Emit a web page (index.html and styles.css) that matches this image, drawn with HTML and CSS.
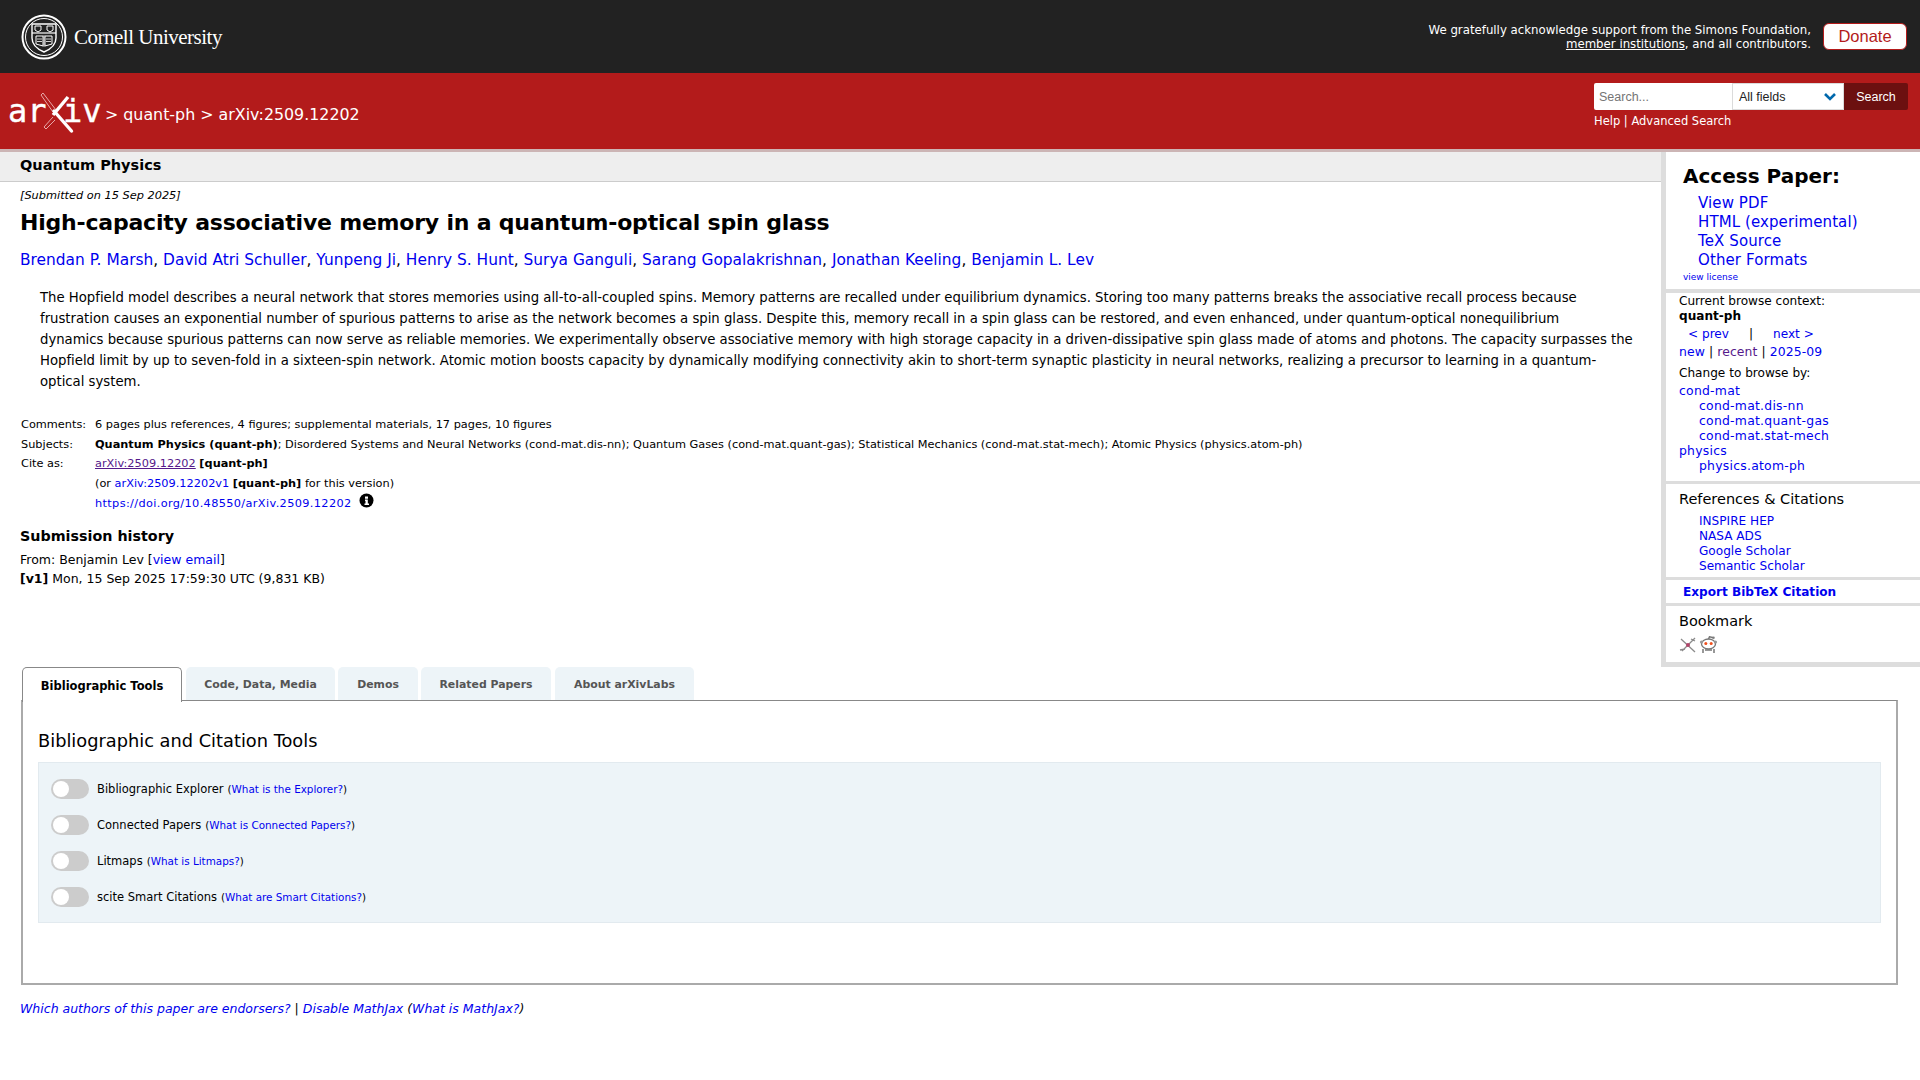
FILE: index.html
```html
<!DOCTYPE html>
<html lang="en">
<head>
    <meta charset="UTF-8">
    <title>High-capacity associative memory in a quantum-optical spin glass</title>
    <link rel="stylesheet" href="styles.css">
</head>
<body>
    <div class="top-bar">
        <div class="cornell">
            <svg class="seal" width="46" height="46" viewBox="0 0 46 46" fill="none" stroke="#fff">
                <circle cx="23" cy="23" r="21.5" stroke-width="2"/>
                <circle cx="23" cy="23" r="18.5" stroke-width="1"/>
                <path d="M11 10h24v14c0 7-5 11-12 14c-7-3-12-7-12-14z" stroke-width="1.4"/>
                <path d="M11 19h24" stroke-width="1.2"/>
                <path d="M14 12h6v4l-3 2l-3-2zM26 12h6v4l-3 2l-3-2z" stroke-width="1"/>
                <path d="M15 22h7v10l-7-2zM31 22h-7v10l7-2z" stroke-width="1"/>
                <path d="M16 25h5M16 27.500h5M25 25h5M25 27.500h5M23 21v12" stroke-width=".8"/>
            </svg>
            <span class="cornell-name">Cornell University</span>
        </div>
        <div class="support">
            <p class="thanks">We gratefully acknowledge support from the Simons Foundation,<br><a href="#">member institutions</a>, and all contributors.</p>
            <a class="donate" href="#">Donate</a>
        </div>
    </div>

    <div class="red-bar">
        <div class="crumbs">
            <svg class="logo" width="104" height="50" viewBox="0 0 104 50" fill="none">
                <text class="logo-text" x="8" y="32">ar</text>
                <text class="logo-text" x="63" y="32">iv</text>
                <path d="M41 5l2-2l13 17l-3 2z" stroke="#e8a9a9" stroke-width="1"/>
                <path d="M54 21l17.500 20" stroke="#fff" stroke-width="3.400" stroke-linecap="round"/>
                <path d="M68 7L53 25" stroke="#fff" stroke-width="3.400"/>
                <path d="M53 27l-9 10l2 2l9-9" stroke="#e8a9a9" stroke-width="1"/>
            </svg>
            <span class="path">&gt; <a href="#">quant-ph</a> &gt; arXiv:2509.12202</span>
        </div>
        <div class="search">
            <div class="search-row">
                <input class="search-input" type="text" placeholder="Search...">
                <div class="search-select">All fields
                    <svg width="14" height="9" viewBox="0 0 14 9" fill="none"><path d="M2 2l5 5l5-5" stroke="#0068ac" stroke-width="2.600"/></svg>
                </div>
                <button class="search-button">Search</button>
            </div>
            <p class="search-links"><a href="#">Help</a> | <a href="#">Advanced Search</a></p>
        </div>
    </div>

    <div class="main">
        <div class="content">
            <div class="subheader">Quantum Physics</div>
            <div class="paper">
                <div class="dateline">[Submitted on 15 Sep 2025]</div>
                <h1 class="title">High-capacity associative memory in a quantum-optical spin glass</h1>
                <div class="authors"><a href="#">Brendan P. Marsh</a>, <a href="#">David Atri Schuller</a>, <a href="#">Yunpeng Ji</a>, <a href="#">Henry S. Hunt</a>, <a href="#">Surya Ganguli</a>, <a href="#">Sarang Gopalakrishnan</a>, <a href="#">Jonathan Keeling</a>, <a href="#">Benjamin L. Lev</a></div>
                <blockquote class="abstract">The Hopfield model describes a neural network that stores memories using all-to-all-coupled spins. Memory patterns are recalled under equilibrium dynamics. Storing too many patterns breaks the associative recall process because<br>frustration causes an exponential number of spurious patterns to arise as the network becomes a spin glass. Despite this, memory recall in a spin glass can be restored, and even enhanced, under quantum-optical nonequilibrium<br>dynamics because spurious patterns can now serve as reliable memories. We experimentally observe associative memory with high storage capacity in a driven-dissipative spin glass made of atoms and photons. The capacity surpasses the<br>Hopfield limit by up to seven-fold in a sixteen-spin network. Atomic motion boosts capacity by dynamically modifying connectivity akin to short-term synaptic plasticity in neural networks, realizing a precursor to learning in a quantum-<br>optical system.</blockquote>
                <table class="meta">
                    <tr><td class="meta-label">Comments:</td><td>6 pages plus references, 4 figures; supplemental materials, 17 pages, 10 figures</td></tr>
                    <tr><td class="meta-label">Subjects:</td><td><b>Quantum Physics (quant-ph)</b>; Disordered Systems and Neural Networks (cond-mat.dis-nn); Quantum Gases (cond-mat.quant-gas); Statistical Mechanics (cond-mat.stat-mech); Atomic Physics (physics.atom-ph)</td></tr>
                    <tr><td class="meta-label">Cite as:</td><td><a class="visited underline" href="#">arXiv:2509.12202</a> <b>[quant-ph]</b></td></tr>
                    <tr><td></td><td>(or <a href="#">arXiv:2509.12202v1</a> <b>[quant-ph]</b> for this version)</td></tr>
                    <tr><td></td><td><a class="doi" href="#">https://doi.org/10.48550/arXiv.2509.12202</a>
                        <svg class="info" width="15" height="15" viewBox="0 0 15 15"><circle cx="7.500" cy="7.500" r="7" fill="#000"/><path d="M6 3.500h3v2.200H6zM6 6.500h2.800v4H10V12H5.500v-1.500h1v-2.500h-.5z" fill="#fff"/></svg>
                    </td></tr>
                </table>
                <h2 class="history-title">Submission history</h2>
                <div class="history">From: Benjamin Lev [<a href="#">view email</a>]<br><b>[v1]</b> Mon, 15 Sep 2025 17:59:30 UTC (9,831 KB)</div>
            </div>
        </div>

        <div class="sidebar">
            <div class="side-section access">
                <h2 class="access-title">Access Paper:</h2>
                <ul class="access-links">
                    <li><a href="#">View PDF</a></li>
                    <li><a href="#">HTML (experimental)</a></li>
                    <li><a href="#">TeX Source</a></li>
                    <li><a href="#">Other Formats</a></li>
                </ul>
                <a class="license" href="#">view license</a>
            </div>
            <div class="side-section browse">
                <div>Current browse context:</div>
                <div><b>quant-ph</b></div>
                <div class="prevnext"><a href="#">&lt;&nbsp;prev</a><span class="sep">|</span><a href="#">next&nbsp;&gt;</a></div>
                <div class="recent"><a href="#">new</a> | <a class="visited" href="#">recent</a> | <a href="#">2025-09</a></div>
                <div class="change">Change to browse by:</div>
                <ul class="browse-list">
                    <li><a href="#">cond-mat</a></li>
                    <li class="sub"><a href="#">cond-mat.dis-nn</a></li>
                    <li class="sub"><a href="#">cond-mat.quant-gas</a></li>
                    <li class="sub"><a href="#">cond-mat.stat-mech</a></li>
                    <li><a href="#">physics</a></li>
                    <li class="sub"><a href="#">physics.atom-ph</a></li>
                </ul>
            </div>
            <div class="side-section refs">
                <h3 class="side-title">References &amp; Citations</h3>
                <ul class="refs-list">
                    <li class="sub"><a href="#">INSPIRE HEP</a></li>
                    <li class="sub"><a href="#">NASA ADS</a></li>
                    <li class="sub"><a href="#">Google Scholar</a></li>
                    <li class="sub"><a href="#">Semantic Scholar</a></li>
                </ul>
            </div>
            <div class="side-section export"><a href="#">Export BibTeX Citation</a></div>
            <div class="side-section bookmark">
                <h3 class="side-title">Bookmark</h3>
                <div class="bookmark-icons">
                    <svg width="18" height="18" viewBox="0 0 18 18" fill="none" stroke="#8b8b8b" stroke-width="1.300">
                        <path d="M2 3l14 13M16 2L3 15M1 14l5-1M12 3l4 2"/>
                        <circle cx="9" cy="9" r="2" fill="#b0456a" stroke="none"/>
                    </svg>
                    <svg width="19" height="18" viewBox="0 0 19 18">
                        <ellipse cx="9.500" cy="8" rx="7" ry="5" fill="#fff" stroke="#777" stroke-width="1.300"/>
                        <circle cx="2.500" cy="6" r="1.600" fill="#999"/>
                        <circle cx="16.500" cy="6" r="1.600" fill="#999"/>
                        <circle cx="6.800" cy="7.500" r="1.500" fill="#f0501e"/>
                        <circle cx="12.200" cy="7.500" r="1.500" fill="#f0501e"/>
                        <circle cx="14.500" cy="1.800" r="1.300" fill="#888"/>
                        <path d="M9.500 3l1-2.200l4 1M4 13v4M15 13v4M6 14h7" stroke="#777" stroke-width="1.500" fill="none"/>
                    </svg>
                </div>
            </div>
        </div>
    </div>

    <div class="labs">
        <div class="tabs">
            <div class="tab active">Bibliographic Tools</div>
            <div class="tab tab-code">Code, Data, Media</div>
            <div class="tab tab-demos">Demos</div>
            <div class="tab tab-related">Related Papers</div>
            <div class="tab tab-about">About arXivLabs</div>
        </div>
        <div class="panel">
            <h2 class="panel-title">Bibliographic and Citation Tools</h2>
            <div class="tool-box">
                <div class="tool"><span class="toggle"></span><span class="tool-name">Bibliographic Explorer</span> <span class="tool-help">(<a href="#">What is the Explorer?</a>)</span></div>
                <div class="tool"><span class="toggle"></span><span class="tool-name">Connected Papers</span> <span class="tool-help">(<a href="#">What is Connected Papers?</a>)</span></div>
                <div class="tool"><span class="toggle"></span><span class="tool-name">Litmaps</span> <span class="tool-help">(<a href="#">What is Litmaps?</a>)</span></div>
                <div class="tool"><span class="toggle"></span><span class="tool-name">scite Smart Citations</span> <span class="tool-help">(<a href="#">What are Smart Citations?</a>)</span></div>
            </div>
        </div>
    </div>

    <div class="endorsers"><a href="#">Which authors of this paper are endorsers?</a> | <a href="#">Disable MathJax</a> (<a href="#">What is MathJax?</a>)</div>
</body>
</html>
```

FILE: styles.css
```css
body {
    margin: 0;
    font-family: "DejaVu Sans", sans-serif;
    color: #000;
    background: #fff;
}
a {
    color: #0000ee;
    text-decoration: none;
}
a.visited {
    color: #551a8b;
}
a.underline {
    text-decoration: underline;
}
ul {
    list-style: none;
    margin: 0;
    padding: 0;
}

/* top bars */
.top-bar {
    height: 73px;
    background: #222;
    color: #fff;
    display: flex;
    justify-content: space-between;
    align-items: center;
    padding: 0 13px 0 21px;
    box-sizing: border-box;
}
.cornell {
    display: flex;
    align-items: center;
    gap: 7px;
}
.cornell-name {
    font-family: "Liberation Serif", serif;
    font-size: 21px;
    letter-spacing: -.5px;
    padding-top: 2px;
}
.support {
    display: flex;
    align-items: center;
    gap: 12px;
}
.thanks {
    margin: 0;
    text-align: right;
    font-size: 11.770px;
    line-height: 14px;
}
.thanks a {
    color: #fff;
    text-decoration: underline;
}
.donate {
    width: 84px;
    height: 27px;
    box-sizing: border-box;
    background: #fff;
    border: 1px solid #b31b1b;
    border-radius: 6px;
    color: #b31b1b;
    font-family: "Liberation Sans", sans-serif;
    font-size: 16.500px;
    line-height: 25px;
    text-align: center;
}
.red-bar {
    height: 79px;
    background: #b31b1b;
    border-bottom: 3px solid #ccb5b5;
    box-sizing: border-box;
    display: flex;
    justify-content: space-between;
    padding: 0 12px 0 0;
    color: #fff;
}
.crumbs {
    display: flex;
    align-items: flex-start;
    font-size: 15.850px;
}
.logo {
    margin-top: 17px;
}
.logo-text {
    font-family: "DejaVu Sans Mono", monospace;
    font-size: 32px;
    fill: #fff;
    stroke: #fff;
    stroke-width: .4px;
}
.path {
    margin: 32px 0 0 1px;
}
.path a {
    color: #fff;
}
.search {
    padding-top: 10px;
}
.search-row {
    display: flex;
    height: 27px;
}
.search-input {
    width: 138px;
    box-sizing: border-box;
    border: none;
    border-radius: 2px 0 0 2px;
    padding: 0 5px;
    font-family: "Liberation Sans", sans-serif;
    font-size: 12.500px;
}
.search-select {
    width: 112px;
    box-sizing: border-box;
    background: #fff;
    border: 1px solid #dbdbdb;
    padding: 0 6px;
    display: flex;
    align-items: center;
    justify-content: space-between;
    color: #222;
    font-family: "Liberation Sans", sans-serif;
    font-size: 12.500px;
}
.search-button {
    width: 64px;
    border: none;
    border-radius: 0 2px 2px 0;
    background: #6c1010;
    color: #fff;
    font-family: "Liberation Sans", sans-serif;
    font-size: 12.500px;
}
.search-links {
    margin: 3px 0 0;
    font-size: 11.500px;
    line-height: 17px;
}
.search-links a {
    color: #fff;
}

/* paper */
.main {
    display: flex;
    height: 515px;
}
.content {
    flex: 1;
    min-width: 0;
}
.subheader {
    height: 30px;
    box-sizing: border-box;
    background: #eee;
    border-bottom: 1px solid #ccc;
    padding-left: 20px;
    font-size: 14.500px;
    font-weight: bold;
    line-height: 27px;
}
.paper {
    padding: 0 20px;
}
.dateline {
    padding-top: 2px;
    font-size: 11.330px;
    font-style: italic;
    line-height: 23px;
}
.title {
    margin: 0;
    font-size: 22px;
    letter-spacing: -.21px;
    line-height: 31px;
}
.authors {
    margin-top: 11px;
    font-size: 15.400px;
    letter-spacing: .01px;
    line-height: 22px;
}
.abstract {
    margin: 16px 0 0 20px;
    font-size: 13.250px;
    letter-spacing: -.011px;
    line-height: 21px;
}
.meta {
    margin: 23px 0 0 1px;
    border-collapse: collapse;
    font-size: 11.320px;
    line-height: 19.500px;
}
.meta td {
    padding: 0;
}
.meta-label {
    width: 74px;
}
.doi {
    letter-spacing: .36px;
}
.info {
    vertical-align: -1px;
    margin-left: 4px;
}
.history-title {
    margin: 11px 0 0;
    font-size: 14.300px;
    line-height: 22px;
    font-weight: bold;
}
.history {
    margin-top: 3px;
    font-size: 12.500px;
    line-height: 19.500px;
}

/* right column */
.sidebar {
    width: 259px;
    height: 515px;
    box-sizing: border-box;
    background: #ddd;
    padding: 0 0 5px 5px;
    display: flex;
    flex-direction: column;
}
.side-section {
    background: #fff;
    font-size: 12.100px;
    line-height: 15px;
    padding-left: 13px;
}
.access {
    height: 137px;
    margin-bottom: 4px;
    box-sizing: border-box;
    padding: 9px 0 0 17px;
}
.access-title {
    margin: 0 0 3px;
    font-size: 20px;
    line-height: 30px;
}
.access-links {
    padding-left: 15px;
    font-size: 15px;
    letter-spacing: .1px;
    line-height: 19px;
}
.license {
    display: block;
    font-size: 9px;
    line-height: 14px;
}
.browse {
    height: 188px;
    margin-bottom: 3px;
    box-sizing: border-box;
    padding-top: 1px;
}
.prevnext {
    margin-top: 1px;
    padding-left: 9px;
    line-height: 18px;
}
.sep {
    margin: 0 20px;
}
.recent {
    font-size: 12.400px;
    letter-spacing: .1px;
    line-height: 18px;
}
.change {
    margin: 5px 0 2px;
}
.browse-list {
    font-size: 12.400px;
    letter-spacing: .25px;
}
.sub {
    padding-left: 20px;
}
.refs {
    height: 93px;
    margin-bottom: 3px;
    box-sizing: border-box;
    padding-top: 5px;
}
.side-title {
    margin: 0;
    font-size: 14.500px;
    font-weight: normal;
    line-height: 20px;
}
.refs-list {
    margin-top: 5px;
}
.export {
    height: 23px;
    margin-bottom: 3px;
    padding-left: 17px;
    font-weight: bold;
    line-height: 25px;
}
.bookmark {
    flex: 1;
    padding-top: 5px;
}
.bookmark-icons {
    display: flex;
    gap: 2px;
    margin-top: 5px;
}

/* labs tabs */
.labs {
    padding: 0 22px 0 21px;
}
.tabs {
    display: flex;
    height: 33px;
    padding-left: 1px;
    position: relative;
    z-index: 1;
}
.tab {
    box-sizing: border-box;
    height: 33px;
    background: #edf4f8;
    border-radius: 5px 5px 0 0;
    color: #555;
    font-size: 10.900px;
    font-weight: bold;
    text-align: center;
    line-height: 36px;
    margin-right: 4px;
}
.tab.active {
    width: 160px;
    height: 35px;
    background: #fff;
    border: 1px solid #888;
    border-bottom: none;
    color: #000;
    font-size: 11.500px;
    line-height: 36px;
}
.tab-code {
    width: 149px;
    margin-right: 3px;
}
.tab-demos {
    width: 80px;
    margin-right: 3px;
}
.tab-related {
    width: 130px;
    margin-right: 4px;
}
.tab-about {
    width: 139px;
}
.panel {
    height: 285px;
    box-sizing: border-box;
    border: 2px solid #aaa;
    border-top: 1px solid #888;
    padding: 28px 15px 0;
}
.panel-title {
    margin: 0 0 9px;
    font-size: 17.800px;
    font-weight: normal;
    line-height: 24px;
}
.tool-box {
    height: 161px;
    box-sizing: border-box;
    background: #edf4f8;
    border: 1px solid #e2eaef;
    padding: 16px 12px 0;
}
.tool {
    display: flex;
    align-items: center;
    height: 20px;
    margin-bottom: 16px;
    font-size: 11.500px;
}
.toggle {
    width: 38px;
    height: 20px;
    border-radius: 10px;
    background: #ccc;
    margin-right: 8px;
    box-sizing: border-box;
    display: flex;
    align-items: center;
    padding-left: 2px;
}
.toggle::before {
    content: "";
    width: 16px;
    height: 16px;
    border-radius: 50%;
    background: #fff;
}
.tool-help {
    margin-left: 4px;
    font-size: 10.400px;
}
.endorsers {
    margin: 14px 0 60px 20px;
    font-size: 12.500px;
    font-style: italic;
    line-height: 20px;
}
```
